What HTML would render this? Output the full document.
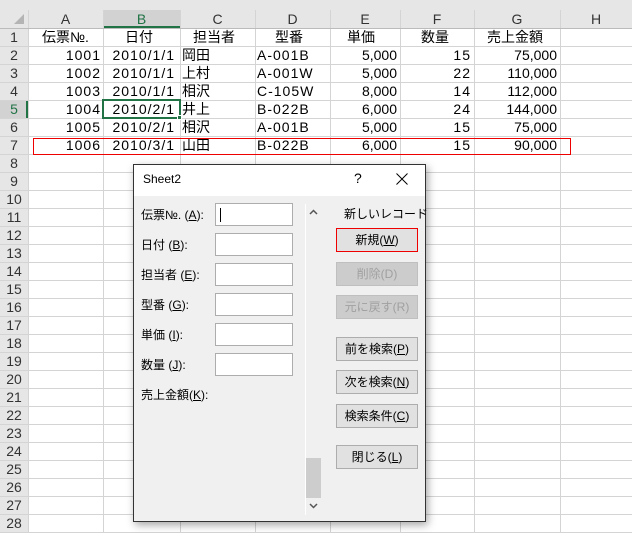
<!DOCTYPE html><html><head><meta charset="utf-8"><style>
*{margin:0;padding:0;box-sizing:border-box}
body{width:632px;height:533px;overflow:hidden;background:#fff;font-family:"Liberation Sans","Noto Sans CJK JP",sans-serif;position:relative}
.a{position:absolute}
.vl{position:absolute;top:10px;height:523px;width:1px;background:#d4d4d4}
.hl{position:absolute;left:0;width:632px;height:1px;background:#d4d4d4}
.t{position:absolute;font-size:14px;line-height:18px;white-space:nowrap;color:#000}
.n{letter-spacing:1px}
.rh{position:absolute;left:0;width:28px;text-align:center;font-size:14px;line-height:18px;color:#333}
.ch{position:absolute;top:10px;height:18px;text-align:center;font-size:14px;line-height:18px;color:#333}
.lbl{position:absolute;left:141px;font-size:12px;color:#000;white-space:nowrap}
.tb{position:absolute;left:215px;width:78px;height:23px;background:#fff;border:1px solid #adadad}
.btn{position:absolute;left:336px;width:82px;height:24px;background:#e1e1e1;border:1px solid #adadad;font-size:12px;line-height:22px;text-align:center;color:#000}
.dis{color:#a0a0a0;background:#ccc;border-color:#bfbfbf}
u{text-decoration:underline}
</style></head><body>
<div class="a" style="left:0;top:0;width:632px;height:28px;background:#e6e6e6"></div>
<div class="a" style="left:0;top:0;width:28px;height:533px;background:#e6e6e6"></div>
<div class="a" style="left:103px;top:10px;width:77px;height:18px;background:#d2d2d2;border-bottom:2px solid #217346"></div>
<div class="a" style="left:0;top:100px;width:28px;height:18px;background:#d2d2d2;border-right:2px solid #217346"></div>
<div class="a" style="left:14px;top:14px;width:0;height:0;border-left:10px solid transparent;border-bottom:10px solid #b4b4b4"></div>
<div class="vl" style="left:28px"></div><div class="vl" style="left:103px"></div><div class="vl" style="left:180px"></div><div class="vl" style="left:255px"></div><div class="vl" style="left:330px"></div><div class="vl" style="left:400px"></div><div class="vl" style="left:474px"></div><div class="vl" style="left:560px"></div>
<div class="hl" style="top:28px;background:#bbb"></div>
<div class="hl" style="top:46px"></div><div class="hl" style="top:64px"></div><div class="hl" style="top:82px"></div><div class="hl" style="top:100px"></div><div class="hl" style="top:118px"></div><div class="hl" style="top:136px"></div><div class="hl" style="top:154px"></div><div class="hl" style="top:172px"></div><div class="hl" style="top:190px"></div><div class="hl" style="top:208px"></div><div class="hl" style="top:226px"></div><div class="hl" style="top:244px"></div><div class="hl" style="top:262px"></div><div class="hl" style="top:280px"></div><div class="hl" style="top:298px"></div><div class="hl" style="top:316px"></div><div class="hl" style="top:334px"></div><div class="hl" style="top:352px"></div><div class="hl" style="top:370px"></div><div class="hl" style="top:388px"></div><div class="hl" style="top:406px"></div><div class="hl" style="top:424px"></div><div class="hl" style="top:442px"></div><div class="hl" style="top:460px"></div><div class="hl" style="top:478px"></div><div class="hl" style="top:496px"></div><div class="hl" style="top:514px"></div><div class="hl" style="top:532px"></div>
<div class="ch" style="left:28px;width:75px">A</div><div class="ch" style="left:103px;width:77px;color:#217346">B</div><div class="ch" style="left:180px;width:75px">C</div><div class="ch" style="left:255px;width:75px">D</div><div class="ch" style="left:330px;width:70px">E</div><div class="ch" style="left:400px;width:74px">F</div><div class="ch" style="left:474px;width:86px">G</div><div class="ch" style="left:560px;width:72px">H</div>
<div class="rh" style="top:28px">1</div><div class="rh" style="top:46px">2</div><div class="rh" style="top:64px">3</div><div class="rh" style="top:82px">4</div><div class="rh" style="top:100px;color:#217346">5</div><div class="rh" style="top:118px">6</div><div class="rh" style="top:136px">7</div><div class="rh" style="top:154px">8</div><div class="rh" style="top:172px">9</div><div class="rh" style="top:190px">10</div><div class="rh" style="top:208px">11</div><div class="rh" style="top:226px">12</div><div class="rh" style="top:244px">13</div><div class="rh" style="top:262px">14</div><div class="rh" style="top:280px">15</div><div class="rh" style="top:298px">16</div><div class="rh" style="top:316px">17</div><div class="rh" style="top:334px">18</div><div class="rh" style="top:352px">19</div><div class="rh" style="top:370px">20</div><div class="rh" style="top:388px">21</div><div class="rh" style="top:406px">22</div><div class="rh" style="top:424px">23</div><div class="rh" style="top:442px">24</div><div class="rh" style="top:460px">25</div><div class="rh" style="top:478px">26</div><div class="rh" style="top:496px">27</div><div class="rh" style="top:514px">28</div>
<div class="t" style="left:42px;top:28px">伝票№.</div><div class="t" style="left:125px;top:28px">日付</div><div class="t" style="left:193px;top:28px">担当者</div><div class="t" style="left:275px;top:28px">型番</div><div class="t" style="left:347px;top:28px">単価</div><div class="t" style="left:421px;top:28px">数量</div><div class="t" style="left:487px;top:28px">売上金額</div>
<div id="d"></div>
<script>
var rows=[["1001","2010/1/1","岡田","A-001B","5,000","15","75,000"],["1002","2010/1/1","上村","A-001W","5,000","22","110,000"],["1003","2010/1/1","相沢","C-105W","8,000","14","112,000"],["1004","2010/2/1","井上","B-022B","6,000","24","144,000"],["1005","2010/2/1","相沢","A-001B","5,000","15","75,000"],["1006","2010/3/1","山田","B-022B","6,000","15","90,000"]];
var h="";rows.forEach(function(r,i){var y=46+i*18;
h+='<div class="t n" style="right:'+(632-101)+'px;top:'+y+'px">'+r[0]+'</div>';
h+='<div class="t n" style="right:'+(632-175)+'px;top:'+y+'px">'+r[1]+'</div>';
h+='<div class="t" style="left:182px;top:'+y+'px">'+r[2]+'</div>';
h+='<div class="t n" style="left:257px;top:'+y+'px;font-size:14px">'+r[3]+'</div>';
h+='<div class="t" style="right:'+(632-397)+'px;top:'+y+'px">'+r[4]+'</div>';
h+='<div class="t n" style="right:'+(632-471)+'px;top:'+y+'px">'+r[5]+'</div>';
h+='<div class="t" style="right:'+(632-557)+'px;top:'+y+'px">'+r[6]+'</div>';});
document.getElementById("d").innerHTML=h;
</script>
<div class="a" style="left:102px;top:99px;width:79px;height:20px;border:2px solid #217346"></div>
<div class="a" style="left:177px;top:115px;width:5px;height:5px;background:#217346;border:1px solid #fff"></div>
<div class="a" style="left:33px;top:138px;width:538px;height:17px;border:1px solid #e00"></div>
<div class="a" style="left:133px;top:164px;width:293px;height:358px;background:#f0f0f0;border:1px solid #333;box-shadow:2px 3px 8px rgba(0,0,0,.35)">
<div class="a" style="left:0;top:0;width:291px;height:31px;background:#fff"></div>
<div class="a" style="left:9px;top:7px;font-size:12px">Sheet2</div>
<div class="a" style="left:220px;top:5px;font-size:14px">?</div>
<svg class="a" style="left:262px;top:8px" width="12" height="12"><path d="M0.5 0.5L11.5 11.5M11.5 0.5L0.5 11.5" stroke="#000" stroke-width="1"/></svg>
</div>
<div class="lbl" style="top:206px">伝票№. (<u>A</u>):</div>
<div class="lbl" style="top:236px">日付 (<u>B</u>):</div>
<div class="lbl" style="top:266px">担当者 (<u>E</u>):</div>
<div class="lbl" style="top:296px">型番 (<u>G</u>):</div>
<div class="lbl" style="top:326px">単価 (<u>I</u>):</div>
<div class="lbl" style="top:356px">数量 (<u>J</u>):</div>
<div class="lbl" style="top:386px">売上金額(<u>K</u>):</div>
<div class="tb" style="top:203px"><div class="a" style="left:4px;top:4px;width:1px;height:14px;background:#000"></div></div>
<div class="tb" style="top:233px"></div><div class="tb" style="top:263px"></div><div class="tb" style="top:293px"></div><div class="tb" style="top:323px"></div><div class="tb" style="top:353px"></div>
<div class="a" style="left:305px;top:204px;width:1px;height:311px;background:#fff"></div>
<div class="a" style="left:306px;top:458px;width:15px;height:40px;background:#cdcdcd"></div>
<svg class="a" style="left:309px;top:209px" width="9" height="6"><path d="M1 5L4.5 1.5L8 5" stroke="#555" stroke-width="1.5" fill="none"/></svg>
<svg class="a" style="left:309px;top:503px" width="9" height="6"><path d="M1 1L4.5 4.5L8 1" stroke="#555" stroke-width="1.5" fill="none"/></svg>
<div class="a" style="left:344px;top:205px;font-size:12px">新しいレコード</div>
<div class="btn" style="top:228px;border-color:#e00">新規(<u>W</u>)</div>
<div class="btn dis" style="top:262px">削除(D)</div>
<div class="btn dis" style="top:295px">元に戻す(R)</div>
<div class="btn" style="top:337px">前を検索(<u>P</u>)</div>
<div class="btn" style="top:370px">次を検索(<u>N</u>)</div>
<div class="btn" style="top:404px">検索条件(<u>C</u>)</div>
<div class="btn" style="top:445px">閉じる(<u>L</u>)</div>
</body></html>
